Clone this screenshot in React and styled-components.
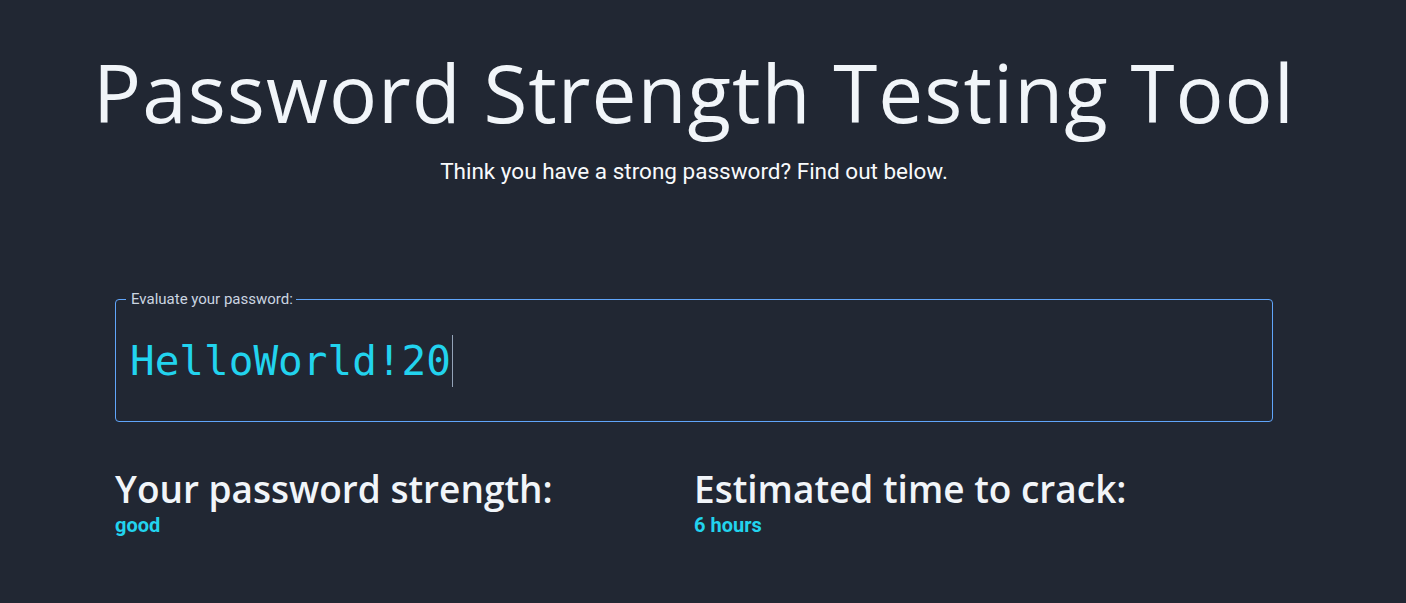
import React from "react";
import styled, { createGlobalStyle } from "styled-components";

const Global = createGlobalStyle`
  html, body { margin: 0; padding: 0; background: #212733; }
  body { font-family: Roboto, "Liberation Sans", sans-serif; color: #f1f5f9; }
`;

const Page = styled.main`
  min-height: 603px;
  background: #212733;
  display: flex;
  flex-direction: column;
  align-items: center;
  padding: 44px 18px 0 0;
  box-sizing: border-box;
`;

const Title = styled.h1`
  margin: 0;
  font-family: "Open Sans", "DejaVu Sans", sans-serif;
  font-weight: 400;
  font-size: 80px;
  line-height: 96px;
  letter-spacing: 1px;
  color: #f1f5f9;
  text-align: center;
`;

const Subtitle = styled.p`
  margin: 18px 0 0;
  font-family: Roboto, sans-serif;
  font-size: 22.5px;
  line-height: 27px;
  color: #f8fafc;
`;

const Content = styled.section`
  width: 1158px;
  margin-top: 105px;
`;

const Field = styled.fieldset`
  margin: 0;
  padding: 0 14px;
  height: 132px;
  box-sizing: border-box;
  border: 1px solid #60a5fa;
  border-radius: 4px;
  display: flex;
  align-items: center;
`;

const Legend = styled.legend`
  font-family: Roboto, sans-serif;
  font-size: 15px;
  line-height: 18px;
  color: #cbd5e1;
  padding: 0 3px 0 5px;
  margin-left: -4px;
`;

const Entry = styled.div`
  font-family: "DejaVu Sans Mono", monospace;
  font-size: 41px;
  line-height: 52px;
  color: #22d3ee;
  display: flex;
  align-items: center;
  margin-top: -8px;
`;

const Caret = styled.span`
  display: inline-block;
  width: 1px;
  height: 52px;
  background: #94a3b8;
  margin-left: 1px;
`;

const Results = styled.div`
  display: grid;
  grid-template-columns: 1fr 1fr;
  margin-top: 42px;
`;

const Stat = styled.div`
  display: flex;
  flex-direction: column;
`;

const StatLabel = styled.h2`
  margin: 0;
  font-family: "Open Sans", "DejaVu Sans", sans-serif;
  font-weight: 600;
  font-size: 37px;
  line-height: 50px;
  color: #f1f5f9;
`;

const StatValue = styled.span`
  font-family: Roboto, sans-serif;
  font-weight: 700;
  font-size: 20px;
  line-height: 23px;
  color: #22d3ee;
`;

export default function App() {
  return (
    <>
      <Global />
      <Page>
        <Title>Password Strength Testing Tool</Title>
        <Subtitle>Think you have a strong password? Find out below.</Subtitle>
        <Content>
          <Field>
            <Legend>Evaluate your password:</Legend>
            <Entry>
              HelloWorld!20
              <Caret />
            </Entry>
          </Field>
          <Results>
            <Stat>
              <StatLabel>Your password strength:</StatLabel>
              <StatValue>good</StatValue>
            </Stat>
            <Stat>
              <StatLabel>Estimated time to crack:</StatLabel>
              <StatValue>6 hours</StatValue>
            </Stat>
          </Results>
        </Content>
      </Page>
    </>
  );
}
